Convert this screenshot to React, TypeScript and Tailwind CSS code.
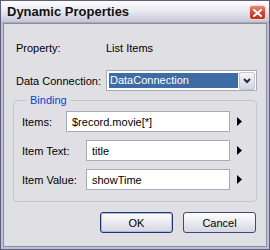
import React from "react";

const font = { fontFamily: '"Liberation Sans", Arial, sans-serif' };

function Arrow() {
  return (
    <svg width="5" height="9" viewBox="0 0 5 9" className="ml-[7px] shrink-0">
      <path d="M0 0 L5 4.5 L0 9 Z" fill="#000" />
    </svg>
  );
}

function Field({ label, value, labelW, inputW }: { label: string; value: string; labelW: string; inputW: string }) {
  return (
    <div className="flex items-center h-[21px]">
      <div className={`${labelW} text-[11px] text-black leading-[14px]`}>{label}</div>
      <div className={`${inputW} h-[21px] border border-[#a5acb5] bg-white flex items-center pl-[5px] text-[11px] text-black leading-[14px]`}>
        {value}
      </div>
      <Arrow />
    </div>
  );
}

export default function App() {
  return (
    <div className="w-[270px] h-[250px] flex flex-col bg-[#c0bfd3] border border-[#5f5d7d] overflow-hidden" style={font}>
      {/* title bar */}
      <div className="h-[22px] shrink-0 flex items-center justify-between bg-linear-to-b from-[#fdfdfe] via-[#e9e9f0] to-[#c6c5d6] border-b border-[#a9a8bd] pl-[6px] pr-[3px]">
        <span className="text-[13px] font-bold text-[#111] leading-[16px]">Dynamic Properties</span>
        <div className="w-[17px] h-[15px] mt-[2px] rounded-[3px] border border-[#f3d7d0] bg-linear-to-b from-[#e68a78] via-[#cf4a33] to-[#b9351f] flex items-center justify-center">
          <svg width="9" height="8" viewBox="0 0 9 8">
            <path d="M1 1 L8 7 M8 1 L1 7" stroke="#fff" strokeWidth="2" strokeLinecap="square" />
          </svg>
        </div>
      </div>
      {/* frame + body */}
      <div className="flex-1 mx-[2px] mb-[2px] border border-[#8c8aa6] bg-[#e0dfe3] flex flex-col pl-[9px] pr-[9px]">
        <div className="mt-[17px] h-[14px] flex items-center text-[11px] leading-[14px] text-black pl-[3px]">
          <span className="w-[90px]">Property:</span>
          <span>List Items</span>
        </div>
        <div className="mt-[15px] h-[21px] flex items-center pl-[3px]">
          <span className="w-[90px] text-[11px] leading-[14px] text-black">Data Connection:</span>
          <div className="flex-1 h-[21px] border border-[#a5acb5] bg-white flex pl-[2px] pt-[2px] pb-[1px] pr-[1px]">
            <div className="flex-1 h-[15px] bg-[#3d6ba6] text-white text-[11px] leading-[15px] pl-[1px]">DataConnection</div>
            <div className="w-[16px] -mt-[1px] ml-[1px] h-[18px] rounded-[2px] border border-[#c6c6d6] bg-linear-to-b from-[#f6f6fa] to-[#d4d3e0] flex items-center justify-center">
              <svg width="8" height="6" viewBox="0 0 8 6">
                <path d="M1 1 L4 4 L7 1" stroke="#2a2a3a" strokeWidth="2" fill="none" />
              </svg>
            </div>
          </div>
        </div>
        <fieldset className="mt-[2px] border border-[#c5c4cf] rounded-[4px] pl-[8px] pb-[11px] pt-[4px] flex flex-col gap-[8px]">
          <legend className="ml-[5px] px-[3px] text-[11px] leading-[14px] text-[#0046d5]">Binding</legend>
          <Field label="Items:" value="$record.movie[*]" labelW="w-[44px]" inputW="w-[164px]" />
          <Field label="Item Text:" value="title" labelW="w-[64px]" inputW="w-[144px]" />
          <Field label="Item Value:" value="showTime" labelW="w-[64px]" inputW="w-[144px]" />
        </fieldset>
        <div className="mt-[10px] flex justify-end gap-[10px] pr-[1px]">
          <button className="w-[73px] h-[21px] rounded-[3px] border border-[#22346a] bg-linear-to-b from-white to-[#d6d6e2] shadow-[inset_0_0_0_1px_#a8bde6] text-[11px] text-black leading-[14px]">OK</button>
          <button className="w-[73px] h-[21px] rounded-[3px] border border-[#3c4a78] bg-linear-to-b from-white to-[#d6d6e2] text-[11px] text-black leading-[14px]">Cancel</button>
        </div>
      </div>
    </div>
  );
}
